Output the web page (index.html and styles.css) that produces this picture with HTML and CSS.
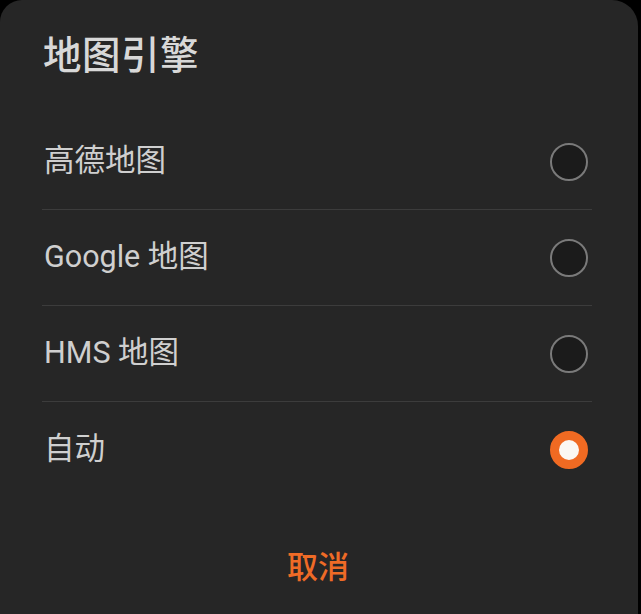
FILE: index.html
```html
<!DOCTYPE html>
<html lang="zh-CN">
<head>
<meta charset="utf-8">
<link rel="stylesheet" href="styles.css">
</head>
<body>
<div class="sheet">
  <div class="header"><h1 class="title">地图引擎</h1></div>
  <ul class="list">
    <li class="row"><span class="label">高德地图</span><span class="radio"></span></li>
    <li class="row"><span class="label">Google 地图</span><span class="radio"></span></li>
    <li class="row"><span class="label">HMS 地图</span><span class="radio"></span></li>
    <li class="row"><span class="label">自动</span><span class="radio checked"></span></li>
  </ul>
  <div class="footer"><span class="cancel">取消</span></div>
</div>
</body>
</html>
```
FILE: styles.css
```css
html, body {
  margin: 0;
  padding: 0;
  background: #000;
}
body {
  width: 641px;
  height: 614px;
  overflow: hidden;
  font-family: Roboto, "Noto Sans CJK SC", sans-serif;
}
.sheet {
  width: 638px;
  height: 614px;
  background: #262626;
  border-radius: 22px 26px 0 0;
  box-sizing: border-box;
  padding: 0 46px 0 42px;
  display: flex;
  flex-direction: column;
}
.header {
  height: 114px;
  display: flex;
  align-items: center;
  padding-left: 1px;
}
.title {
  margin: 0;
  font-size: 38.5px;
  font-weight: 500;
  color: #d8d8d8;
  line-height: 1;
  letter-spacing: 0.5px;
  transform: translateY(-1px);
}
.list {
  list-style: none;
  margin: 0;
  padding: 0;
}
.row {
  height: 95px;
  display: flex;
  align-items: center;
  justify-content: space-between;
  border-bottom: 1px solid #3c3c3c;
  padding: 0 4px 0 2px;
}
.row:last-child {
  border-bottom: none;
}
.label {
  font-size: 30.5px;
  color: #cfcfcf;
  line-height: 1;
}
.radio {
  width: 38px;
  height: 38px;
  box-sizing: border-box;
  border-radius: 50%;
  border: 2px solid #7a7a7a;
  background: #1b1b1b;
}
.radio.checked {
  border: 9px solid #f06a22;
  background: #fbf7f2;
}
.footer {
  flex: 1;
  display: flex;
  justify-content: center;
  align-items: center;
  padding-top: 23px;
}
.cancel {
  font-size: 31px;
  font-weight: 500;
  color: #ef6b26;
  line-height: 1;
  margin-left: 2px;
}
```
